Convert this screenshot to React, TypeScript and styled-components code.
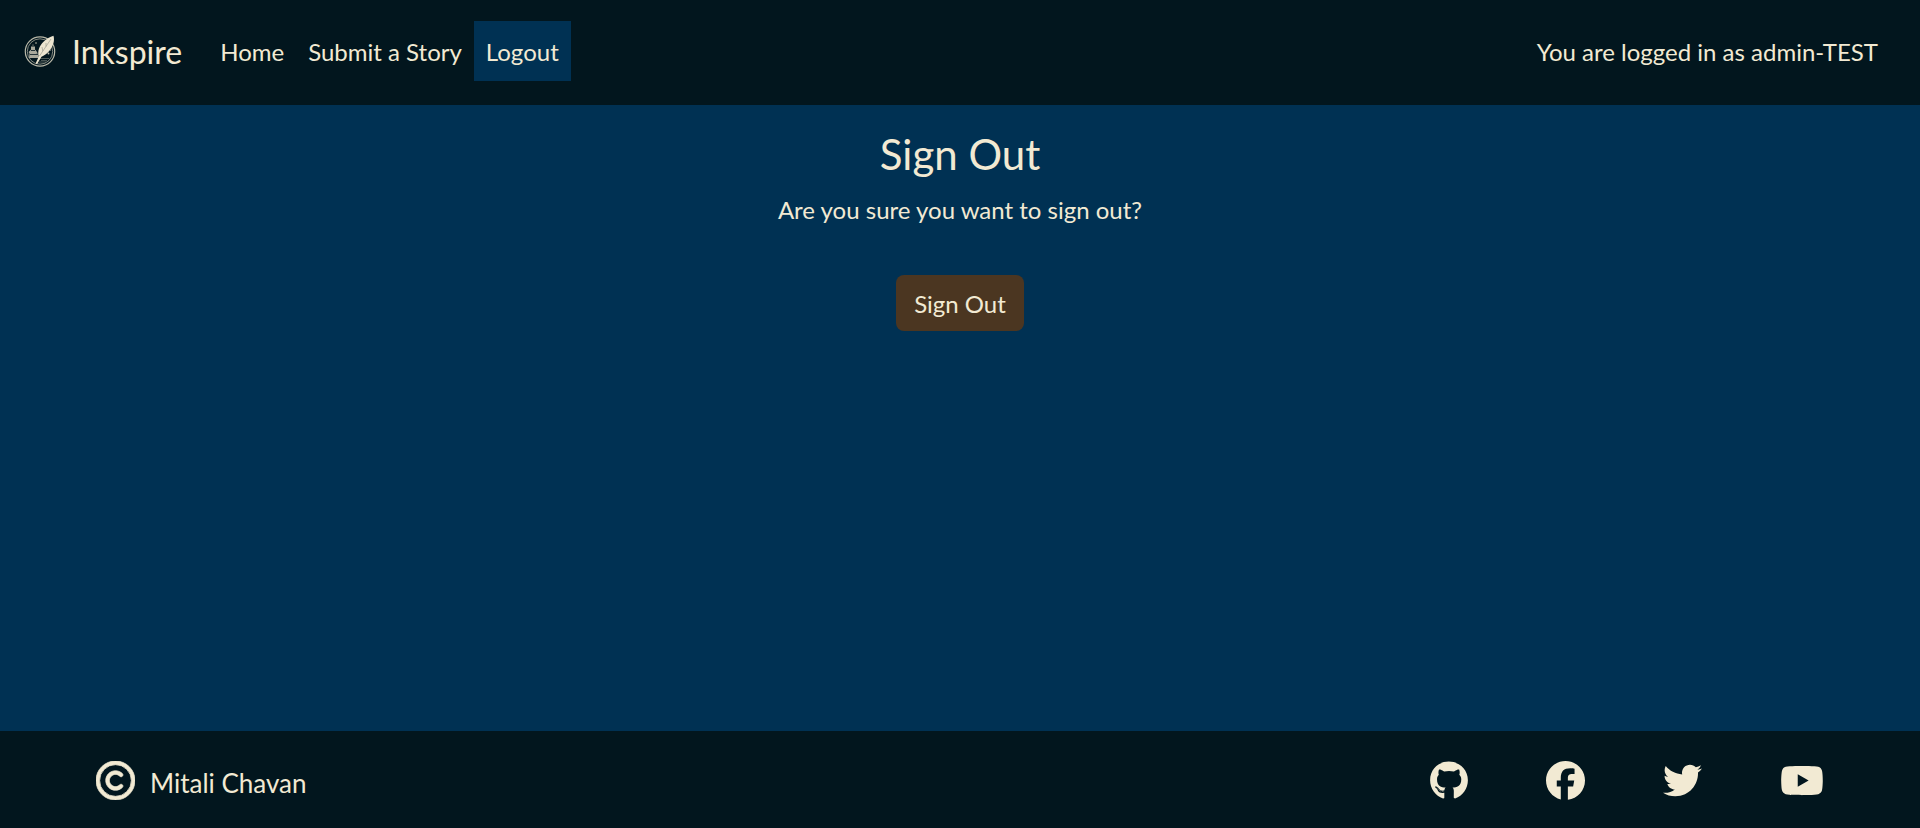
import React from "react";
import styled, { createGlobalStyle } from "styled-components";
import { FaRegCopyright, FaGithub, FaFacebook, FaTwitter, FaYoutube } from "react-icons/fa6";

const GlobalStyle = createGlobalStyle`
  *, *::before, *::after { box-sizing: border-box; }
  body {
    margin: 0;
    background: #003153;
    color: #f2ead3;
    font-family: Lato, "Liberation Sans", sans-serif;
    font-size: 24px;
    line-height: 36px;
  }
`;

const Page = styled.div`
  display: flex;
  flex-direction: column;
  min-height: 100vh;
`;

const Header = styled.header`
  display: flex;
  align-items: center;
  padding: 21px 42px 24px 24px;
  background: #02161e;
`;

const Brand = styled.a`
  display: flex;
  align-items: center;
  gap: 16px;
  margin-right: 26px;
  color: inherit;
  font-size: 32px;
  text-decoration: none;
`;

const BrandName = styled.span`
  padding-top: 2px;
`;

const Nav = styled.nav`
  display: flex;
  flex: 1;
`;

const NavLink = styled.a<{ $active?: boolean }>`
  padding: 13px 12px 11px;
  background: ${(p) => (p.$active ? "#003153" : "transparent")};
  color: inherit;
  text-decoration: none;
`;

const UserStatus = styled.span`
  padding: 13px 0 11px;
`;

const Main = styled.main`
  display: flex;
  flex: 1;
  flex-direction: column;
  align-items: center;
  padding: 23px 24px;
`;

const Title = styled.h1`
  margin: 0 0 12px;
  font-size: 42px;
  font-weight: 400;
  line-height: 52px;
`;

const Question = styled.p`
  margin: 0 0 47px;
`;

const SignOutButton = styled.button`
  padding: 11px 18px 9px;
  border: 0;
  border-radius: 8px;
  background: #4b3621;
  color: inherit;
  font: inherit;
  cursor: pointer;
`;

const Footer = styled.footer`
  display: flex;
  align-items: center;
  justify-content: space-between;
  padding: 30px 5% 28px;
  background: #02161e;
`;

const Owner = styled.div`
  display: flex;
  align-items: center;
  gap: 15px;
  font-size: 26px;
  line-height: 34px;
  svg {
    width: 39px;
    height: 39px;
    stroke: currentColor;
    stroke-width: 10;
  }
`;

const OwnerName = styled.span`
  padding-top: 5px;
`;

const Social = styled.div`
  display: flex;
  gap: 78px;
`;

const SocialLink = styled.a<{ $width: number }>`
  color: inherit;
  svg {
    display: block;
    width: ${(p) => p.$width}px;
    height: 39px;
  }
`;

const Logo = () => (
  <svg width="32" height="32" viewBox="0 0 32 32" aria-hidden="true">
    <g fill="none" stroke="#b9b8a8">
      <circle cx="16" cy="16.500" r="14.700" strokeWidth="1.200" />
      <circle cx="16" cy="16.500" r="12.700" strokeWidth=".7" />
      <path d="M16 23.500h9M17 25.500h6M15 27h7" strokeWidth=".8" opacity=".5" />
    </g>
    <path d="M7 11.500h4v3l2.500 3-1 1h2l.5 4.500H5l.5-4.500-1-1.500 2.500-2.500z" fill="#a9a99c" />
    <path d="M7 15.500h4M6 19.500h8" stroke="#02161e" strokeWidth=".8" />
    <path d="M29.500.7c1.500 5-.5 11-4.500 15.500-2 2.500-5 4.500-7.500 5.500l-4.500 7.500-1.400-.7 3.400-7.500c-2-4.500.5-10.500 4.500-14.300 3-3 6.500-5 10-6z" fill="#ece5d0" />
    <path d="M27 4L15.500 21M18 12l.8 4M22 8v3.500" stroke="#8e9084" strokeWidth=".6" fill="none" />
    <g fill="#c9c6b4">
      <circle cx="12" cy="8" r=".8" />
      <circle cx="9" cy="10" r=".6" />
      <circle cx="24.500" cy="18.500" r=".9" />
      <circle cx="26.500" cy="15" r=".6" />
    </g>
  </svg>
);

const socials = [
  { name: "GitHub", Icon: FaGithub, width: 38 },
  { name: "Facebook", Icon: FaFacebook, width: 39 },
  { name: "Twitter", Icon: FaTwitter, width: 39 },
  { name: "YouTube", Icon: FaYoutube, width: 44 },
];

export default function App() {
  return (
    <Page>
      <GlobalStyle />
      <Header>
        <Brand href="#"><Logo /><BrandName>Inkspire</BrandName></Brand>
        <Nav>
          <NavLink href="#">Home</NavLink>
          <NavLink href="#">Submit a Story</NavLink>
          <NavLink href="#" $active aria-current="page">Logout</NavLink>
        </Nav>
        <UserStatus>You are logged in as admin-TEST</UserStatus>
      </Header>
      <Main>
        <Title>Sign Out</Title>
        <Question>Are you sure you want to sign out?</Question>
        <SignOutButton type="button">Sign Out</SignOutButton>
      </Main>
      <Footer>
        <Owner><FaRegCopyright /><OwnerName>Mitali Chavan</OwnerName></Owner>
        <Social>
          {socials.map(({ name, Icon, width }) => (
            <SocialLink key={name} href="#" aria-label={name} $width={width}><Icon /></SocialLink>
          ))}
        </Social>
      </Footer>
    </Page>
  );
}
